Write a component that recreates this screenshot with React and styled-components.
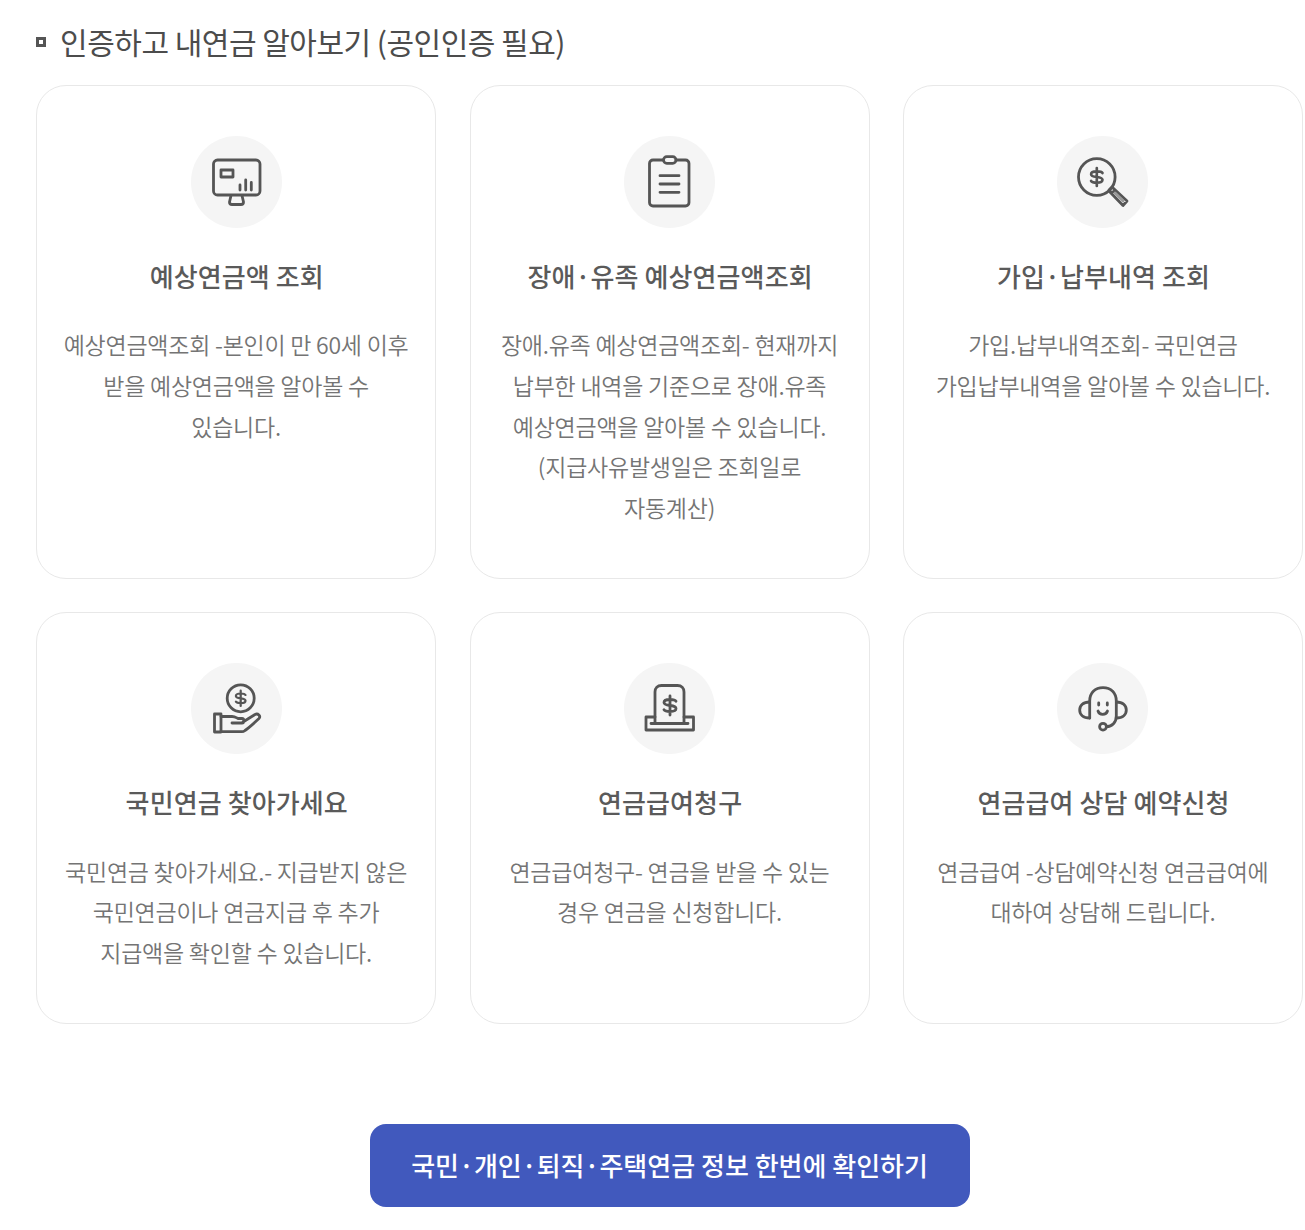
import React from "react";
import styled, { createGlobalStyle } from "styled-components";

const GlobalStyle = createGlobalStyle`
  html, body {
    margin: 0;
    padding: 0;
    background: #fff;
    font-family: "Noto Sans CJK KR", "Noto Sans", sans-serif;
  }
`;

const Page = styled.div`
  width: 1305px;
  height: 1230px;
  box-sizing: border-box;
  padding: 20px 2px 0 36.1px;
  overflow: hidden;
`;

const Heading = styled.h2`
  display: flex;
  align-items: center;
  gap: 14px;
  margin: 0 0 22px;
  height: 43px;
  font-size: 30px;
  line-height: 43px;
  font-weight: 400;
  letter-spacing: -0.5px;
  color: #4c4c4c;
`;

const Bullet = styled.span`
  width: 10px;
  height: 10px;
  box-sizing: border-box;
  border: 3px solid #555;
  background: #fff;
`;

const Grid = styled.div`
  display: grid;
  grid-template-columns: repeat(3, 400px);
  column-gap: 33.41px;
  row-gap: 32.6px;
`;

const Card = styled.article`
  box-sizing: border-box;
  padding: 50px 26px;
  border: 1px solid #e8e8e8;
  border-radius: 30px;
  display: flex;
  flex-direction: column;
  align-items: center;
  text-align: center;
  background: #fff;
`;

const IconCircle = styled.div`
  width: 91px;
  height: 91.8px;
  border-radius: 50%;
  background: #f5f5f5;
  flex: none;
`;

const Glyph = styled.svg`
  display: block;
  fill: none;
  stroke: #555;
  stroke-width: 2.8;
  stroke-linecap: round;
  stroke-linejoin: round;
`;

const CardTitle = styled.h3`
  margin: 29px 0 30.2px;
  font-size: 26px;
  line-height: 37px;
  font-weight: 500;
  letter-spacing: 0.1px;
  color: #5a5a5a;
  transform: translateX(0.6px);
`;

const CardText = styled.p`
  margin: 0;
  font-size: 23px;
  line-height: 40.8px;
  font-weight: 350;
  letter-spacing: -0.24px;
  color: #747474;
  word-break: keep-all;
`;

const Footer = styled.div`
  display: flex;
  justify-content: center;
  margin-top: 99.8px;
`;

const MainButton = styled.a`
  width: 600px;
  height: 83px;
  display: flex;
  align-items: center;
  justify-content: center;
  padding-bottom: 2px;
  box-sizing: border-box;
  border-radius: 16px;
  background: #4159bd;
  color: #fff;
  font-size: 26px;
  font-weight: 500;
  letter-spacing: 0;
`;

const Dollar = ({ x, y, s = 1 }) => (
  <g transform={`translate(${x} ${y}) scale(${s})`}>
    <path d="M6 -4.2C5.2 -5.6 3.4 -6 0 -6C-3.6 -6 -6 -4.9 -6 -3C-6 -.9 -3.4 -.4 0 0C3.4 .4 6 1 6 3C6 4.9 3.6 6 0 6C-3.4 6 -5.2 5.5 -6 4.2M0 -9.5V9.5" />
  </g>
);

const Icon = ({ children }) => (
  <IconCircle>
    <Glyph width="91" height="92" viewBox="0 0 91 92">
      {children}
    </Glyph>
  </IconCircle>
);

const cards = [
  {
    title: "예상연금액 조회",
    text: "예상연금액조회 -본인이 만 60세 이후 받을 예상연금액을 알아볼 수 있습니다.",
    icon: (
      <>
        <rect x="22.5" y="24" width="46.5" height="35" rx="4" />
        <path d="M40 59.5L38.5 66C38.5 67.5 39.5 68.5 41 68.5H50C51.5 68.5 52.5 67.5 52.5 66L51 59.5" />
        <rect x="30" y="34" width="12" height="7" />
        <path d="M49 49V54M54.7 44V54M60.3 46.5V54" />
      </>
    ),
  },
  {
    title: "장애·유족 예상연금액조회",
    text: "장애.유족 예상연금액조회- 현재까지 납부한 내역을 기준으로 장애.유족 예상연금액을 알아볼 수 있습니다. (지급사유발생일은 조회일로 자동계산)",
    icon: (
      <>
        <path d="M39 24H29C27 24 25.5 25.5 25.5 27.5V66.5C25.5 68.5 27 70 29 70H61.5C63.5 70 65 68.5 65 66.5V27.5C65 25.5 63.5 24 61.5 24H52" />
        <rect x="39.5" y="20.7" width="12.5" height="6.6" rx="3.3" />
        <path d="M36 39.7H55M36 48H55M36 56.3H55" />
      </>
    ),
  },
  {
    title: "가입·납부내역 조회",
    text: "가입.납부내역조회- 국민연금 가입납부내역을 알아볼 수 있습니다.",
    icon: (
      <>
        <circle cx="39.8" cy="41" r="18.3" />
        <Dollar x={39.8} y={41} s={0.95} />
        <path d="M52 54L55 51L58 54L55 57ZM55 51L70 65L66 69.5L52 55" />
        <path d="M58 57L66 65" stroke="#999" />
      </>
    ),
  },
  {
    title: "국민연금 찾아가세요",
    text: "국민연금 찾아가세요.- 지급받지 않은 국민연금이나 연금지급 후 추가 지급액을 확인할 수 있습니다.",
    icon: (
      <>
        <circle cx="49.7" cy="35.3" r="13.5" />
        <Dollar x={49.7} y={35.3} s={0.8} />
        <rect x="23.5" y="51" width="6.5" height="18" />
        <path d="M30 53.5H41C44 53.5 45 54.5 47 55.5H51C53.5 55.5 53.5 60 51 60H41M52 59L64 51.5C67 50 70 53 68 55.5C63 60 59 64 54 67.5C53 68.3 52 68.7 51 68.7H30" />
      </>
    ),
  },
  {
    title: "연금급여청구",
    text: "연금급여청구- 연금을 받을 수 있는 경우 연금을 신청합니다.",
    icon: (
      <>
        <path d="M31 60V29C31 25 33.5 22.5 37.5 22.5H53.5C57.5 22.5 60 25 60 29V60" />
        <path d="M31 54H22V67H69.5V54H60M27 60.5H64" />
        <Dollar x={46} y={42.5} s={1} />
      </>
    ),
  },
  {
    title: "연금급여 상담 예약신청",
    text: "연금급여 -상담예약신청 연금급여에 대하여 상담해 드립니다.",
    icon: (
      <>
        <path d="M32.7 55V38C32.7 30 38 24.7 46 24.7C54 24.7 59.3 30 59.3 38V53C59.3 59.5 55 63.5 49.5 63.7" />
        <path d="M32.7 39C26 39 22.7 42.5 22.7 47C22.7 51.5 26 55 32.7 55" />
        <path d="M59.3 39C66 39 69.3 42.5 69.3 47C69.3 51.5 66 55 59.3 55" />
        <circle cx="46" cy="63.7" r="3.4" />
        <path d="M41.7 40V42M50.3 40V42" />
        <path d="M41 48C42.5 52.5 49 52.5 50.5 48" />
      </>
    ),
  },
];

export default function App() {
  return (
    <Page>
      <GlobalStyle />
      <Heading>
        <Bullet />
        인증하고 내연금 알아보기 (공인인증 필요)
      </Heading>
      <Grid>
        {cards.map((card) => (
          <Card key={card.title}>
            <Icon>{card.icon}</Icon>
            <CardTitle>{card.title}</CardTitle>
            <CardText>{card.text}</CardText>
          </Card>
        ))}
      </Grid>
      <Footer>
        <MainButton>국민·개인·퇴직·주택연금 정보 한번에 확인하기</MainButton>
      </Footer>
    </Page>
  );
}
